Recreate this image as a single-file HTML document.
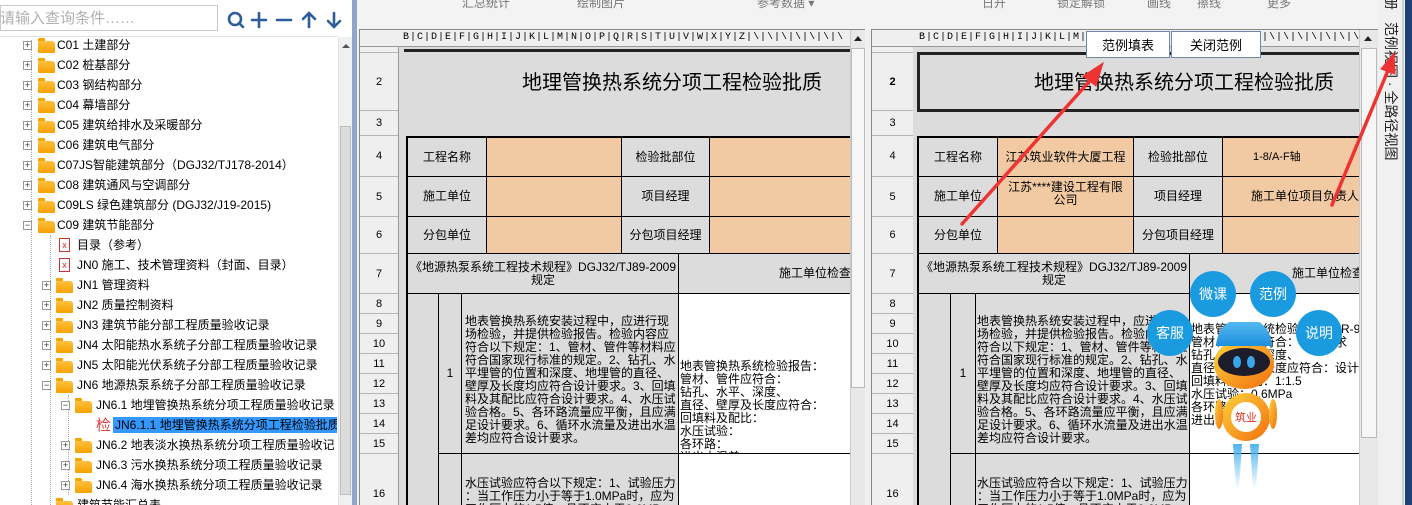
<!DOCTYPE html>
<html><head><meta charset="utf-8"><style>
*{margin:0;padding:0;box-sizing:border-box}
html,body{width:1412px;height:505px;overflow:hidden}
body{background:#f0f0f0;font-family:"Liberation Sans","Noto Sans CJK SC",sans-serif;font-size:12px;color:#000;position:relative}
.a{position:absolute}
.t{position:absolute;white-space:nowrap;font-size:12px;line-height:14px;font-family:"Liberation Sans","Noto Sans CJK SC",sans-serif}
.pl{position:absolute;width:9px;height:9px;border:1px solid #999;background:#fff;font-size:9px;line-height:7px;text-align:center;color:#333}
.fd{position:absolute;width:17px;height:12px;background:linear-gradient(#ffc040,#f5a000);border-radius:1px 3px 1px 1px}
.fd:before{content:"";position:absolute;left:0;top:-3px;width:7px;height:3px;background:#f5a500;border-radius:1px 1px 0 0}
.c{position:absolute;border:1px solid #000;display:flex;align-items:center;justify-content:center;text-align:center;font-size:12px;line-height:13px;white-space:nowrap}
.g{background:#dcdcdc}.o{background:#f1c9a2}.w{background:#fff}
.rh{position:absolute;left:0;width:38px;border-bottom:1px solid #b5b5b5;display:flex;align-items:center;justify-content:center;font-size:11px;background:#efefef}
.bub{position:absolute;width:46px;height:46px;border-radius:50%;background:#1a9be0;color:#fff;font-size:14px;display:flex;align-items:center;justify-content:center}
.txt{position:absolute;font-size:12px;line-height:13px;font-family:"Liberation Sans","Noto Sans CJK SC",sans-serif;white-space:pre}
</style></head><body>

<!-- LEFT PANEL -->
<div class="a" style="left:0;top:0;width:352px;height:505px;background:#fff;overflow:hidden">
 <div class="a" style="left:0;top:5px;width:218px;height:26px;border:1px solid #c9c9c9;background:#fff"></div>
 <div class="t" style="left:0;top:10px;font-size:15px;line-height:17px;color:#b0b0b0">请输入查询条件……</div>
 <svg class="a" style="left:224px;top:9px" width="120" height="22" viewBox="0 0 120 22" fill="none" stroke="#2e5d9c" stroke-width="2.6" stroke-linecap="round">
  <circle cx="11" cy="10" r="6"/><line x1="15" y1="14" x2="19" y2="18"/>
  <line x1="28" y1="11" x2="42" y2="11"/><line x1="35" y1="4" x2="35" y2="18"/>
  <line x1="53" y1="11" x2="67" y2="11"/>
  <line x1="85" y1="4" x2="85" y2="18"/><line x1="79" y1="10" x2="85" y2="4"/><line x1="91" y1="10" x2="85" y2="4"/>
  <line x1="110" y1="4" x2="110" y2="18"/><line x1="104" y1="12" x2="110" y2="18"/><line x1="116" y1="12" x2="110" y2="18"/>
 </svg>
 <div class="a" style="left:0;top:36px;width:338px;height:1px;background:#e0e0e0"></div>
 <div class="a" style="left:31px;top:40px;height:465px;border-left:1px dotted #aaa"></div>
 <div class="a" style="left:50px;top:235px;height:270px;border-left:1px dotted #aaa"></div>
 <div class="a" style="left:68px;top:395px;height:100px;border-left:1px dotted #aaa"></div>

 <div class="pl" style="left:23px;top:41px">+</div><div class="fd" style="left:38px;top:41px"></div><div class="t" style="left:57px;top:38px">C01 土建部分</div>
 <div class="pl" style="left:23px;top:61px">+</div><div class="fd" style="left:38px;top:61px"></div><div class="t" style="left:57px;top:58px">C02 桩基部分</div>
 <div class="pl" style="left:23px;top:81px">+</div><div class="fd" style="left:38px;top:81px"></div><div class="t" style="left:57px;top:78px">C03 钢结构部分</div>
 <div class="pl" style="left:23px;top:101px">+</div><div class="fd" style="left:38px;top:101px"></div><div class="t" style="left:57px;top:98px">C04 幕墙部分</div>
 <div class="pl" style="left:23px;top:121px">+</div><div class="fd" style="left:38px;top:121px"></div><div class="t" style="left:57px;top:118px">C05 建筑给排水及采暖部分</div>
 <div class="pl" style="left:23px;top:141px">+</div><div class="fd" style="left:38px;top:141px"></div><div class="t" style="left:57px;top:138px">C06 建筑电气部分</div>
 <div class="pl" style="left:23px;top:161px">+</div><div class="fd" style="left:38px;top:161px"></div><div class="t" style="left:57px;top:158px">C07JS智能建筑部分（DGJ32/TJ178-2014）</div>
 <div class="pl" style="left:23px;top:181px">+</div><div class="fd" style="left:38px;top:181px"></div><div class="t" style="left:57px;top:178px">C08 建筑通风与空调部分</div>
 <div class="pl" style="left:23px;top:201px">+</div><div class="fd" style="left:38px;top:201px"></div><div class="t" style="left:57px;top:198px">C09LS 绿色建筑部分 (DGJ32/J19-2015)</div>
 <div class="pl" style="left:23px;top:221px">−</div><div class="fd" style="left:38px;top:221px"></div><div class="t" style="left:57px;top:218px">C09 建筑节能部分</div>
 <div class="a" style="left:59px;top:238px;width:11px;height:14px;border:1px solid #c33;background:#fff;color:#d22;font-size:9px;line-height:12px;text-align:center">x</div><div class="t" style="left:77px;top:238px">目录（参考）</div>
 <div class="a" style="left:59px;top:258px;width:11px;height:14px;border:1px solid #c33;background:#fff;color:#d22;font-size:9px;line-height:12px;text-align:center">x</div><div class="t" style="left:77px;top:258px">JN0 施工、技术管理资料（封面、目录）</div>
 <div class="pl" style="left:42px;top:281px">+</div><div class="fd" style="left:56px;top:281px"></div><div class="t" style="left:77px;top:278px">JN1 管理资料</div>
 <div class="pl" style="left:42px;top:301px">+</div><div class="fd" style="left:56px;top:301px"></div><div class="t" style="left:77px;top:298px">JN2 质量控制资料</div>
 <div class="pl" style="left:42px;top:321px">+</div><div class="fd" style="left:56px;top:321px"></div><div class="t" style="left:77px;top:318px">JN3 建筑节能分部工程质量验收记录</div>
 <div class="pl" style="left:42px;top:341px">+</div><div class="fd" style="left:56px;top:341px"></div><div class="t" style="left:77px;top:338px">JN4 太阳能热水系统子分部工程质量验收记录</div>
 <div class="pl" style="left:42px;top:361px">+</div><div class="fd" style="left:56px;top:361px"></div><div class="t" style="left:77px;top:358px">JN5 太阳能光伏系统子分部工程质量验收记录</div>
 <div class="pl" style="left:42px;top:381px">−</div><div class="fd" style="left:56px;top:381px"></div><div class="t" style="left:77px;top:378px">JN6 地源热泵系统子分部工程质量验收记录</div>
 <div class="pl" style="left:61px;top:401px">−</div><div class="fd" style="left:75px;top:401px"></div><div class="t" style="left:96px;top:398px">JN6.1 地埋管换热系统分项工程质量验收记录</div>
 <div class="t" style="left:96px;top:418px;color:#e04040;font-size:15px;line-height:16px">检</div>
 <div class="a" style="left:113px;top:417px;width:224px;height:16px;background:#3399ff"></div>
 <div class="t" style="left:115px;top:418px;color:#000;width:222px;overflow:hidden">JN6.1.1 地埋管换热系统分项工程检验批质</div>
 <div class="pl" style="left:61px;top:441px">+</div><div class="fd" style="left:75px;top:441px"></div><div class="t" style="left:96px;top:438px">JN6.2 地表淡水换热系统分项工程质量验收记</div>
 <div class="pl" style="left:61px;top:461px">+</div><div class="fd" style="left:75px;top:461px"></div><div class="t" style="left:96px;top:458px">JN6.3 污水换热系统分项工程质量验收记录</div>
 <div class="pl" style="left:61px;top:481px">+</div><div class="fd" style="left:75px;top:481px"></div><div class="t" style="left:96px;top:478px">JN6.4 海水换热系统分项工程质量验收记录</div>
 <div class="fd" style="left:56px;top:501px"></div><div class="t" style="left:77px;top:498px">建筑节能汇总表</div>
 <div class="a" style="left:338px;top:37px;width:14px;height:468px;background:#f0f0f0;border-left:1px solid #e3e3e3"></div>
 <div class="a" style="left:340px;top:126px;width:11px;height:369px;background:#dcdcdc;border:1px solid #bdbdbd"></div>
 <div class="a" style="left:342px;top:44px;width:0;height:0;border:4px solid transparent;border-bottom:4px solid #555;border-top:0"></div>
</div>
<div class="a" style="left:352px;top:0;width:5px;height:505px;background:#8ea6c8"></div>

<!-- TOOLBAR -->
<div class="a" style="left:357px;top:0;width:1021px;height:30px;background:#f3f3f3"></div>
<div class="a" style="left:357px;top:0;width:1021px;height:10px;font-size:12px;color:#777;overflow:hidden">
 <span class="a" style="left:105px;top:-6px">汇总统计</span><span class="a" style="left:220px;top:-6px">绘制图片</span>
 <span class="a" style="left:400px;top:-6px">参考数据 ▾</span><span class="a" style="left:625px;top:-6px">日开</span>
 <span class="a" style="left:700px;top:-6px">锁定解锁</span><span class="a" style="left:790px;top:-6px">画线</span><span class="a" style="left:840px;top:-6px">擦线</span><span class="a" style="left:910px;top:-6px">更多</span>
</div>

<!-- MIDDLE SHEET -->
<div class="a" style="left:359px;top:29px;width:506px;height:476px;background:#dcdcdc;overflow:hidden;border-left:1px solid #888;border-top:1px solid #888">
 <div class="a" style="left:0;top:0;width:505px;height:17px;background:#efefef;border-bottom:1px solid #999"></div>
 <div class="a" style="left:43px;top:2px;width:440px;height:12px;font-size:10px;line-height:12px;letter-spacing:1px;font-family:'Liberation Mono',monospace;overflow:hidden;white-space:nowrap">B|C|D|E|F|G|H|I|J|K|L|M|N|O|P|Q|R|S|T|U|V|W|X|Y|Z|\|\|\|\|\|\|\|\|\|\|\|\|\|\|\|\|\|\|\|3|3|3|3</div>
 <div class="a" style="left:0;top:17px;width:39px;height:460px;background:#efefef;border-right:1px solid #999"></div>
 <div class="rh" style="top:17px;height:6px"></div>
 <div class="rh" style="top:23px;height:58px">2</div>
 <div class="rh" style="top:81px;height:25px">3</div>
 <div class="rh" style="top:106px;height:41px">4</div>
 <div class="rh" style="top:147px;height:40px">5</div>
 <div class="rh" style="top:187px;height:37px">6</div>
 <div class="rh" style="top:224px;height:40px">7</div>
 <div class="rh" style="top:264px;height:20px">8</div><div class="rh" style="top:284px;height:20px">9</div><div class="rh" style="top:304px;height:20px">10</div><div class="rh" style="top:324px;height:20px">11</div><div class="rh" style="top:344px;height:20px">12</div><div class="rh" style="top:364px;height:20px">13</div><div class="rh" style="top:384px;height:20px">14</div><div class="rh" style="top:404px;height:20px">15</div>
 <div class="rh" style="top:424px;height:60px;padding-top:20px">16</div>
 <div class="a" style="left:44px;top:19px;width:446px;height:3px;background:#222"></div>
 <div class="t" style="left:162px;top:41px;font-size:20px;line-height:24px">地理管换热系统分项工程检验批质</div>
 <div class="c g" style="left:46px;top:106px;width:81px;height:41px;border-width:2px 1px 1px 2px">工程名称</div>
 <div class="c o" style="left:126px;top:106px;width:136px;height:41px;border-top-width:2px"></div>
 <div class="c g" style="left:261px;top:106px;width:89px;height:41px;border-top-width:2px">检验批部位</div>
 <div class="c o" style="left:349px;top:106px;width:160px;height:41px;border-top-width:2px"></div>
 <div class="c g" style="left:46px;top:146px;width:81px;height:41px;border-left-width:2px">施工单位</div>
 <div class="c o" style="left:126px;top:146px;width:136px;height:41px"></div>
 <div class="c g" style="left:261px;top:146px;width:89px;height:41px">项目经理</div>
 <div class="c o" style="left:349px;top:146px;width:160px;height:41px"></div>
 <div class="c g" style="left:46px;top:186px;width:81px;height:38px;border-left-width:2px">分包单位</div>
 <div class="c o" style="left:126px;top:186px;width:136px;height:38px"></div>
 <div class="c g" style="left:261px;top:186px;width:89px;height:38px">分包项目经理</div>
 <div class="c o" style="left:349px;top:186px;width:160px;height:38px"></div>
 <div class="c g" style="left:46px;top:223px;width:273px;height:41px;border-left-width:2px;flex-direction:column">《地源热泵系统工程技术规程》DGJ32/TJ89-2009<br>规定</div>
 <div class="c g" style="left:318px;top:223px;width:191px;height:41px;justify-content:flex-start;padding-left:100px">施工单位检查</div>
 <div class="c g" style="left:46px;top:263px;width:33px;height:230px;border-left-width:2px"></div>
 <div class="c g" style="left:78px;top:263px;width:24px;height:161px">1</div>
 <div class="c g" style="left:101px;top:263px;width:218px;height:161px"></div>
 <div class="txt" style="left:105px;top:285px">地表管换热系统安装过程中，应进行现
场检验，并提供检验报告。检验内容应
符合以下规定：1、管材、管件等材料应
符合国家现行标准的规定。2、钻孔、水
平埋管的位置和深度、地埋管的直径、
壁厚及长度均应符合设计要求。3、回填
料及其配比应符合设计要求。4、水压试
验合格。5、各环路流量应平衡，且应满
足设计要求。6、循环水流量及进出水温
差均应符合设计要求。</div>
 <div class="c w" style="left:318px;top:263px;width:191px;height:161px"></div>
 <div class="txt" style="left:320px;top:330px">地表管换热系统检验报告：
管材、管件应符合：
钻孔、水平、深度、
直径、壁厚及长度应符合：
回填料及配比：
水压试验：
各环路：
进出水温差：</div>
 <div class="c g" style="left:78px;top:423px;width:24px;height:70px"></div>
 <div class="c g" style="left:101px;top:423px;width:218px;height:70px"></div>
 <div class="c w" style="left:318px;top:423px;width:191px;height:70px"></div>
 <div class="txt" style="left:105px;top:447px">水压试验应符合以下规定：1、试验压力
：当工作压力小于等于1.0MPa时，应为
工作压力的1.5倍，且不应小于0.6MPa</div>
 <div class="a" style="left:490px;top:0;width:16px;height:476px;background:#e8e8e8;border-left:1px solid #ccc"></div>
 <div class="a" style="left:491px;top:18px;width:14px;height:340px;background:#f6f6f6;border:1px solid #bbb"></div>
 <div class="a" style="left:494px;top:6px;width:0;height:0;border:4px solid transparent;border-bottom:5px solid #222;border-top:0"></div>
</div>

<!-- RIGHT SHEET -->
<div class="a" style="left:871px;top:29px;width:507px;height:476px;background:#dcdcdc;overflow:hidden;border-left:1px solid #888;border-top:1px solid #888">
 <div class="a" style="left:0;top:0;width:507px;height:17px;background:#efefef;border-bottom:1px solid #999"></div>
 <div class="a" style="left:47px;top:2px;width:440px;height:12px;font-size:10px;line-height:12px;letter-spacing:1px;font-family:'Liberation Mono',monospace;overflow:hidden;white-space:nowrap">B|C|D|E|F|G|H|I|J|K|L|M|N|O|P|Q|R|S|T|U|V|W|X|Y|Z|\|\|\|\|\|\|\|\|\|\|\|\|\|\|\|\|\|\|\|3|3|3|3</div>
 <div class="a" style="left:0;top:17px;width:41px;height:460px;background:#efefef;border-right:1px solid #999"></div>
 <div class="rh" style="top:17px;height:6px;width:41px"></div>
 <div class="rh" style="top:23px;height:58px;width:41px;font-weight:bold">2</div>
 <div class="rh" style="top:81px;height:25px;width:41px">3</div>
 <div class="rh" style="top:106px;height:41px;width:41px">4</div>
 <div class="rh" style="top:147px;height:40px;width:41px">5</div>
 <div class="rh" style="top:187px;height:37px;width:41px">6</div>
 <div class="rh" style="top:224px;height:40px;width:41px">7</div>
 <div class="rh" style="top:264px;height:20px;width:41px">8</div><div class="rh" style="top:284px;height:20px;width:41px">9</div><div class="rh" style="top:304px;height:20px;width:41px">10</div><div class="rh" style="top:324px;height:20px;width:41px">11</div><div class="rh" style="top:344px;height:20px;width:41px">12</div><div class="rh" style="top:364px;height:20px;width:41px">13</div><div class="rh" style="top:384px;height:20px;width:41px">14</div><div class="rh" style="top:404px;height:20px;width:41px">15</div>
 <div class="rh" style="top:424px;height:60px;padding-top:20px;width:41px">16</div>
 <div class="a" style="left:45px;top:22px;width:460px;height:60px;border:3px solid #222;border-right:0"></div>
 <div class="t" style="left:162px;top:41px;font-size:20px;line-height:24px">地理管换热系统分项工程检验批质</div>
 <div class="c g" style="left:45px;top:106px;width:81px;height:41px;border-width:2px 1px 1px 2px">工程名称</div>
 <div class="c o" style="left:125px;top:106px;width:137px;height:41px;border-top-width:2px">江苏筑业软件大厦工程</div>
 <div class="c g" style="left:261px;top:106px;width:90px;height:41px;border-top-width:2px">检验批部位</div>
 <div class="c o" style="left:350px;top:106px;width:160px;height:41px;border-top-width:2px;justify-content:flex-start;padding-left:30px;font-size:11px">1-8/A-F轴</div>
 <div class="c g" style="left:45px;top:146px;width:81px;height:41px;border-left-width:2px">施工单位</div>
 <div class="c o" style="left:125px;top:146px;width:137px;height:41px;align-items:flex-start;padding-top:4px">江苏****建设工程有限<br>公司</div>
 <div class="c g" style="left:261px;top:146px;width:90px;height:41px">项目经理</div>
 <div class="c o" style="left:350px;top:146px;width:160px;height:41px;justify-content:flex-start;padding-left:28px">施工单位项目负责人</div>
 <div class="c g" style="left:45px;top:186px;width:81px;height:38px;border-left-width:2px">分包单位</div>
 <div class="c o" style="left:125px;top:186px;width:137px;height:38px"></div>
 <div class="c g" style="left:261px;top:186px;width:90px;height:38px">分包项目经理</div>
 <div class="c o" style="left:350px;top:186px;width:160px;height:38px"></div>
 <div class="c g" style="left:45px;top:223px;width:273px;height:41px;border-left-width:2px;flex-direction:column">《地源热泵系统工程技术规程》DGJ32/TJ89-2009<br>规定</div>
 <div class="c g" style="left:317px;top:223px;width:193px;height:41px;justify-content:flex-start;padding-left:102px">施工单位检查</div>
 <div class="c g" style="left:45px;top:263px;width:34px;height:230px;border-left-width:2px"></div>
 <div class="c g" style="left:78px;top:263px;width:26px;height:161px">1</div>
 <div class="c g" style="left:103px;top:263px;width:215px;height:161px"></div>
 <div class="txt" style="left:105px;top:285px">地表管换热系统安装过程中，应进行现
场检验，并提供检验报告。检验内容应
符合以下规定：1、管材、管件等材料应
符合国家现行标准的规定。2、钻孔、水
平埋管的位置和深度、地埋管的直径、
壁厚及长度均应符合设计要求。3、回填
料及其配比应符合设计要求。4、水压试
验合格。5、各环路流量应平衡，且应满
足设计要求。6、循环水流量及进出水温
差均应符合设计要求。</div>
 <div class="c w" style="left:317px;top:263px;width:193px;height:161px"></div>
 <div class="txt" style="left:319px;top:293px">地表管换热系统检验报告：JR-9
管材、管件应符合：设计要求
钻孔、水平、深度、
直径、壁厚及长度应符合：设计
回填料及配比：1:1.5
水压试验：0.6MPa
各环路：
进出水温差：3°</div>
 <div class="c g" style="left:78px;top:423px;width:26px;height:70px"></div>
 <div class="c g" style="left:103px;top:423px;width:215px;height:70px"></div>
 <div class="c w" style="left:317px;top:423px;width:193px;height:70px"></div>
 <div class="txt" style="left:105px;top:447px">水压试验应符合以下规定：1、试验压力
：当工作压力小于等于1.0MPa时，应为
工作压力的1.5倍，且不应小于0.6MPa</div>
 <div class="a" style="left:487px;top:0;width:20px;height:476px;background:#e8e8e8;border-left:1px solid #ccc"></div>
 <div class="a" style="left:489px;top:18px;width:16px;height:390px;background:#f6f6f6;border:1px solid #bbb"></div>
 <div class="a" style="left:492px;top:6px;width:0;height:0;border:4px solid transparent;border-bottom:5px solid #222;border-top:0"></div>
</div>

<div class="a" style="left:1086px;top:31px;width:84px;height:27px;background:#fff;border:1px solid #6f86a8;display:flex;align-items:center;justify-content:center;font-size:13px">范例填表</div>
<div class="a" style="left:1171px;top:31px;width:90px;height:27px;background:#fff;border:1px solid #6f86a8;display:flex;align-items:center;justify-content:center;font-size:13px">关闭范例</div>

<!-- right side panel -->
<div class="a" style="left:1378px;top:0;width:34px;height:505px;background:#f0f0f0"></div>
<div class="a" style="left:1402px;top:0;width:2px;height:505px;background:#c8d0dc"></div>
<div class="a" style="left:1405px;top:0;width:7px;height:505px;background:#1f3f77"></div>
<div class="a" style="left:1383px;top:-4px;width:16px;font-size:14px;line-height:16px;writing-mode:vertical-rl;text-orientation:sideways;color:#222">册</div>
<div class="a" style="left:1383px;top:22px;width:16px;font-size:14px;line-height:16px;writing-mode:vertical-rl;text-orientation:sideways;color:#222;white-space:nowrap">范例视图 · 全路径视图</div>

<svg class="a" style="left:0;top:0" width="1412" height="505">
 <g stroke="#ee3333" stroke-width="3.5" fill="#ee3333" stroke-linecap="round">
  <line x1="962" y1="224" x2="1095" y2="75"/>
  <polygon points="1103,63 1083,76 1096,86" stroke-width="1"/>
  <line x1="1332" y1="205" x2="1389" y2="68"/>
  <polygon points="1394,53 1381,69 1395,74" stroke-width="1"/>
 </g>
</svg>

<div class="bub" style="left:1190px;top:271px">微课</div>
<div class="bub" style="left:1250px;top:271px">范例</div>
<div class="bub" style="left:1147px;top:310px">客服</div>
<div class="bub" style="left:1296px;top:310px">说明</div>
<svg class="a" style="left:1200px;top:322px" width="90" height="183">
 <defs>
  <linearGradient id="hg" x1="0" y1="0" x2="0" y2="1"><stop offset="0" stop-color="#5cc0f5"/><stop offset="1" stop-color="#1e8fdc"/></linearGradient>
  <linearGradient id="og" x1="0" y1="0" x2="1" y2="1"><stop offset="0" stop-color="#ffd23a"/><stop offset="1" stop-color="#f07010"/></linearGradient>
  <linearGradient id="jg" x1="0" y1="0" x2="0" y2="1"><stop offset="0" stop-color="#4fb4f0"/><stop offset="1" stop-color="#4fb4f0" stop-opacity="0"/></linearGradient>
 </defs>
 <ellipse cx="44" cy="42" rx="30" ry="25" fill="url(#og)"/>
 <path d="M16 24 Q18 -2 44 -4 Q70 -2 72 24 Z" fill="url(#hg)"/>
 <ellipse cx="44" cy="40" rx="26" ry="14" fill="#1c1c2a"/>
 <ellipse cx="37" cy="40" rx="4" ry="6" fill="#3aa6ea"/>
 <ellipse cx="51" cy="40" rx="4" ry="6" fill="#3aa6ea"/>
 <circle cx="46" cy="95" r="24" fill="url(#og)"/>
 <circle cx="46" cy="95" r="15" fill="#fff"/>
 <text x="46" y="99" font-size="11" fill="#e03020" text-anchor="middle" font-family="Noto Sans CJK SC,sans-serif">筑业</text>
 <ellipse cx="19" cy="92" rx="4" ry="15" fill="url(#og)"/>
 <ellipse cx="73" cy="92" rx="4" ry="15" fill="url(#og)"/>
 <path d="M33 122 h9 l-3 45 h-3 z" fill="url(#jg)"/>
 <path d="M50 122 h9 l-3 45 h-3 z" fill="url(#jg)"/>
</svg>
</body></html>
